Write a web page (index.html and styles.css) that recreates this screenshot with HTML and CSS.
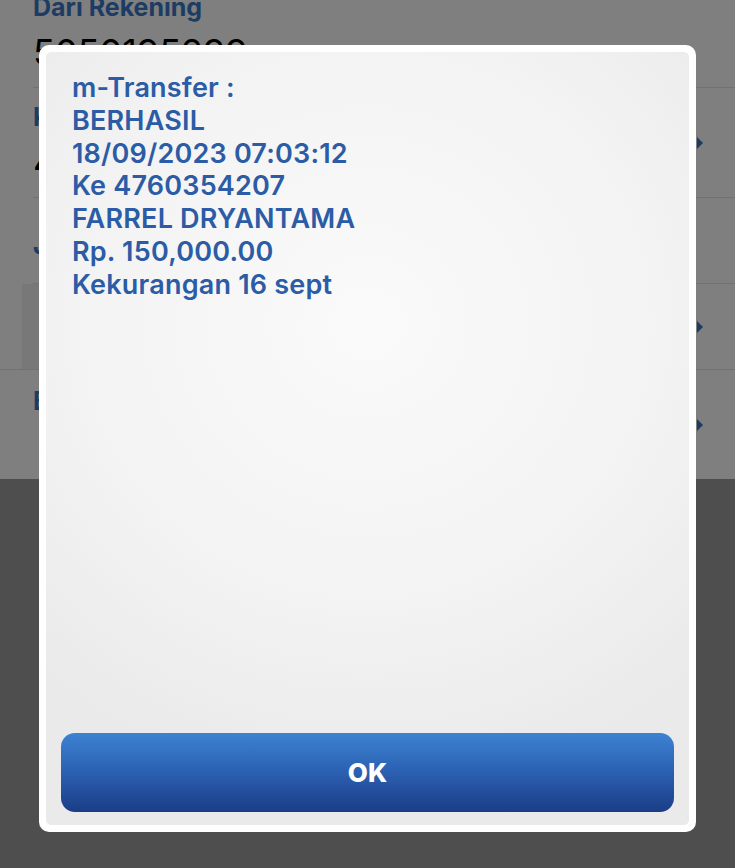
FILE: index.html
```html
<!DOCTYPE html>
<html lang="id">
<head>
<meta charset="utf-8">
<title>m-Transfer</title>
<link rel="stylesheet" href="styles.css">
</head>
<body>
<div class="page">
  <section class="form">
    <div class="row row-first">
      <div class="label">Dari Rekening</div>
      <div class="value">5050195299</div>
    </div>
    <div class="row row-second">
      <div class="row-text">
        <div class="label">Ke Rekening</div>
        <div class="value">4760354207</div>
      </div>
      <span class="chev"></span>
    </div>
    <div class="row row-third">
      <div class="label">Jumlah</div>
    </div>
    <div class="row row-box">
      <div class="box"></div>
      <span class="chev"></span>
    </div>
    <div class="row row-last">
      <div class="label">Berita</div>
      <span class="chev chev-low"></span>
    </div>
  </section>
  <section class="lower"></section>
</div>
<div class="overlay"></div>
<div class="dialog">
  <div class="dialog-inner">
    <div class="message">
      <div>m-Transfer :</div>
      <div>BERHASIL</div>
      <div>18/09/2023 07:03:12</div>
      <div>Ke 4760354207</div>
      <div>FARREL DRYANTAMA</div>
      <div>Rp. 150,000.00</div>
      <div>Kekurangan 16 sept</div>
    </div>
    <button class="ok">OK</button>
  </div>
</div>
</body>
</html>
```
FILE: styles.css
```css
* { box-sizing: border-box; }
html, body { margin: 0; padding: 0; }
body {
  width: 735px;
  height: 868px;
  overflow: hidden;
  font-family: Inter, "Noto Sans", "Liberation Sans", sans-serif;
  background: #9c9c9c;
}
.page {
  display: flex;
  flex-direction: column;
  height: 868px;
}
.form {
  background: #ffffff;
  height: 479px;
  display: flex;
  flex-direction: column;
}
.row {
  display: flex;
  align-items: center;
  justify-content: space-between;
  margin-left: 33px;
  padding-right: 30px;
  border-bottom: 1px solid #e4e4e4;
}
.label {
  color: #3b78c8;
  font-weight: 700;
  font-size: 25px;
  line-height: 30px;
}
.value {
  color: #000;
  font-size: 36px;
  line-height: 44px;
  margin-top: 8px;
}
.row-first {
  height: 96px;
  margin-top: -8px;
  display: block;
}
.row-second { height: 110px; }
.row-third {
  height: 86px;
  padding-top: 8px;
}
.row-box {
  height: 86px;
  margin-left: 0;
  padding-left: 22px;
}
.box {
  flex: 1;
  align-self: stretch;
  background: #f0f0f0;
  margin-right: 10px;
}
.row-last {
  height: 109px;
  border-bottom: none;
  align-items: flex-start;
  padding-top: 16px;
}
.chev {
  width: 0;
  height: 0;
  border-top: 6px solid transparent;
  border-bottom: 6px solid transparent;
  border-left: 6px solid #3b78c8;
  margin-right: 2px;
}
.chev-low { margin-top: 33px; }
.lower {
  flex: 1;
  background: #9c9c9c;
}
.overlay {
  position: absolute;
  inset: 0;
  background: rgba(0, 0, 0, 0.5);
}
.dialog {
  position: absolute;
  left: 39px;
  top: 45px;
  width: 657px;
  height: 787px;
  background: #ffffff;
  border-radius: 10px;
  padding: 7px;
}
.dialog-inner {
  height: 100%;
  border-radius: 5px;
  background:
    radial-gradient(ellipse 75% 60% at 50% 35%, #fafafa 0%, #f3f3f3 60%, #eaeaea 100%);
  display: flex;
  flex-direction: column;
  padding: 20px 15px 13px 15px;
}
.message {
  padding-left: 11px;
  color: #2b5ca5;
  font-size: 27px;
  font-weight: 600;
  letter-spacing: 0.2px;
  line-height: 32.8px;
}
.ok {
  margin-top: auto;
  height: 79px;
  width: 100%;
  border: none;
  border-radius: 14px;
  background: linear-gradient(to bottom, #3d82d2 0%, #2d63b4 45%, #1b3d87 100%);
  color: #ffffff;
  font-family: Inter, "Liberation Sans", sans-serif;
  font-weight: 800;
  font-size: 26px;
  padding: 0;
}
```
